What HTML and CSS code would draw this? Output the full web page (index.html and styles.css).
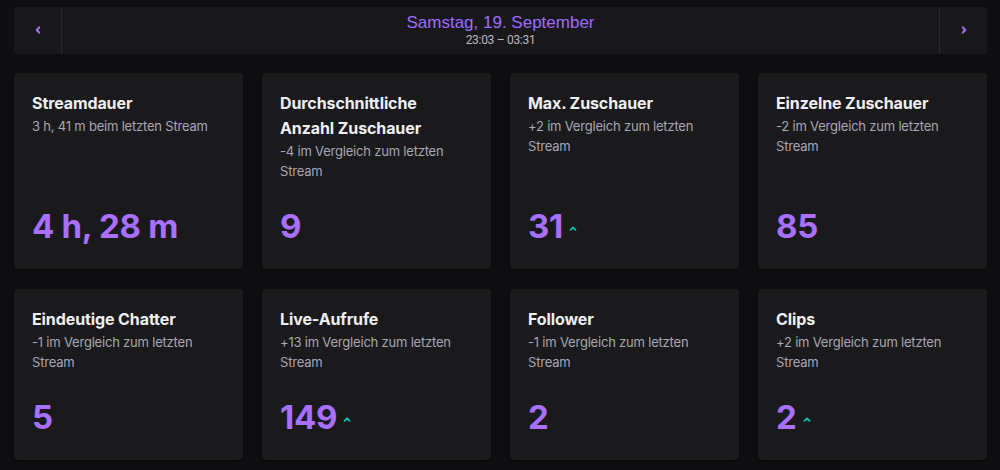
FILE: index.html
```html
<!DOCTYPE html>
<html lang="de">
<head>
<meta charset="utf-8">
<title>Stream-Zusammenfassung</title>
<link rel="stylesheet" href="styles.css">
</head>
<body>
<div class="page">
  <header class="datebar">
    <button class="nav nav-prev" aria-label="Zurück">
      <svg width="6" height="8" viewBox="0 0 6 8"><polyline points="4.2,1.3 1.8,4 4.2,6.7" fill="none" stroke="#a970ff" stroke-width="2" stroke-linecap="round" stroke-linejoin="round"/></svg>
    </button>
    <div class="date">
      <div class="date-title">Samstag, 19. September</div>
      <div class="date-time">23:03 – 03:31</div>
    </div>
    <button class="nav nav-next" aria-label="Weiter">
      <svg width="6" height="8" viewBox="0 0 6 8"><polyline points="1.8,1.3 4.2,4 1.8,6.7" fill="none" stroke="#a970ff" stroke-width="2" stroke-linecap="round" stroke-linejoin="round"/></svg>
    </button>
  </header>

  <section class="grid">
    <div class="card">
      <div class="card-title">Streamdauer</div>
      <div class="card-sub">3 h, 41 m beim letzten Stream</div>
      <div class="card-value">4 h, 28 m</div>
    </div>
    <div class="card">
      <div class="card-title">Durchschnittliche Anzahl Zuschauer</div>
      <div class="card-sub">-4 im Vergleich zum letzten Stream</div>
      <div class="card-value">9</div>
    </div>
    <div class="card">
      <div class="card-title">Max. Zuschauer</div>
      <div class="card-sub">+2 im Vergleich zum letzten Stream</div>
      <div class="card-value">31<svg class="up" width="8" height="5" viewBox="0 0 8 5"><polyline points="1.5,3.8 4,1.3 6.5,3.8" fill="none" stroke="#00c8af" stroke-width="1.8" stroke-linecap="round" stroke-linejoin="round"/></svg></div>
    </div>
    <div class="card">
      <div class="card-title">Einzelne Zuschauer</div>
      <div class="card-sub">-2 im Vergleich zum letzten Stream</div>
      <div class="card-value">85</div>
    </div>
    <div class="card">
      <div class="card-title">Eindeutige Chatter</div>
      <div class="card-sub">-1 im Vergleich zum letzten Stream</div>
      <div class="card-value">5</div>
    </div>
    <div class="card">
      <div class="card-title">Live-Aufrufe</div>
      <div class="card-sub">+13 im Vergleich zum letzten Stream</div>
      <div class="card-value">149<svg class="up" width="8" height="5" viewBox="0 0 8 5"><polyline points="1.5,3.8 4,1.3 6.5,3.8" fill="none" stroke="#00c8af" stroke-width="1.8" stroke-linecap="round" stroke-linejoin="round"/></svg></div>
    </div>
    <div class="card">
      <div class="card-title">Follower</div>
      <div class="card-sub">-1 im Vergleich zum letzten Stream</div>
      <div class="card-value">2</div>
    </div>
    <div class="card">
      <div class="card-title">Clips</div>
      <div class="card-sub">+2 im Vergleich zum letzten Stream</div>
      <div class="card-value">2<svg class="up" width="8" height="5" viewBox="0 0 8 5"><polyline points="1.5,3.8 4,1.3 6.5,3.8" fill="none" stroke="#00c8af" stroke-width="1.8" stroke-linecap="round" stroke-linejoin="round"/></svg></div>
    </div>
  </section>
</div>
</body>
</html>
```

FILE: styles.css
```css
* { box-sizing: border-box; }

html, body {
  margin: 0;
  padding: 0;
  background: #0e0e10;
  height: 100%;
}

body {
  font-family: Inter, "Noto Sans", "Liberation Sans", sans-serif;
  color: #efeff1;
}

.page {
  padding: 7px 13px 0 14px;
}

.datebar {
  display: flex;
  align-items: stretch;
  height: 47px;
  background: #18181b;
  border-radius: 2px;
}

.nav {
  width: 48px;
  flex: 0 0 48px;
  background: transparent;
  border: 0;
  padding: 0 0 2px 0;
  display: flex;
  align-items: center;
  justify-content: center;
  cursor: pointer;
}

.nav-prev { border-right: 1px solid #2a2a2e; }
.nav-next { border-left: 1px solid #2a2a2e; }

.date {
  flex: 1;
  display: flex;
  flex-direction: column;
  align-items: center;
  justify-content: center;
  padding-bottom: 2px;
}

.date-title {
  font-family: "Liberation Sans", Arial, sans-serif;
  font-size: 17px;
  line-height: 20px;
  color: #a06cff;
}

.date-time {
  font-family: Roboto, "Liberation Sans", sans-serif;
  font-size: 12px;
  line-height: 14px;
  color: #b8b8c0;
  letter-spacing: -0.3px;
}

.grid {
  margin-top: 19px;
  display: grid;
  grid-template-columns: repeat(4, 1fr);
  column-gap: 19px;
  row-gap: 20px;
}

.card {
  background: #1a1a1d;
  border-radius: 4px;
  box-shadow: 0 1px 3px rgba(0, 0, 0, 0.5);
  padding: 18px 18px 23px 18px;
  display: flex;
  flex-direction: column;
}

.card-title {
  font-size: 16px;
  font-weight: 700;
  line-height: 25px;
  color: #efeff1;
  letter-spacing: -0.1px;
}

.card-sub {
  font-size: 13px;
  line-height: 20px;
  color: #a8a8b2;
  letter-spacing: -0.2px;
}

.card-value {
  margin-top: auto;
  padding-top: 25px;
  font-size: 33px;
  font-weight: 700;
  line-height: 40px;
  color: #a970ff;
  display: flex;
  align-items: center;
  letter-spacing: -0.3px;
}

.up {
  margin-left: 6px;
  margin-top: 4px;
}
```
